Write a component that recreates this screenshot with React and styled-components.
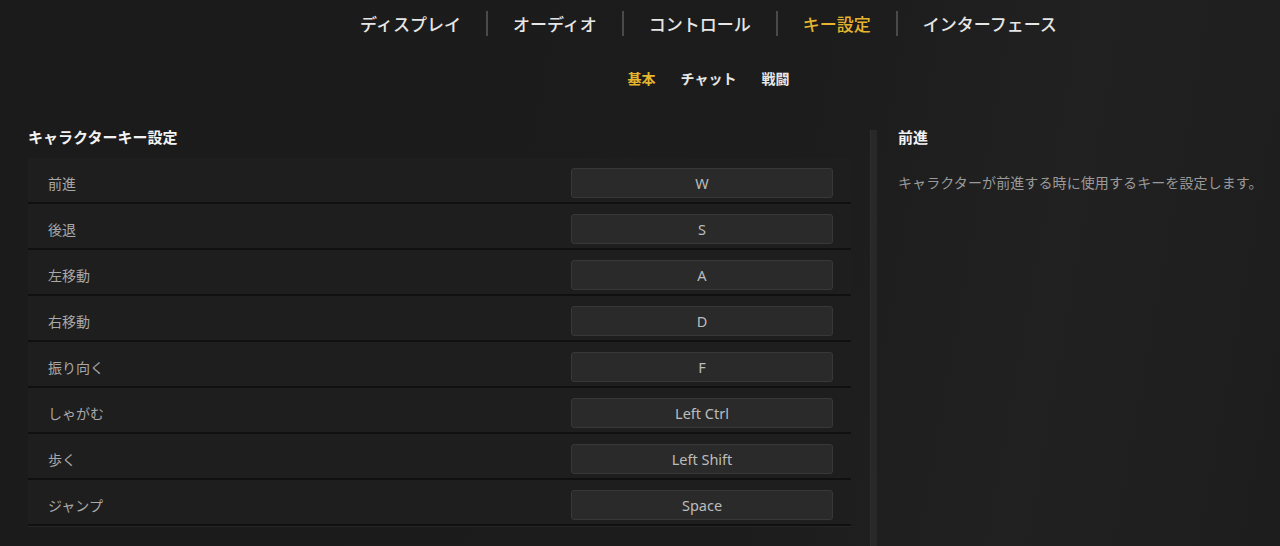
import styled, { createGlobalStyle } from 'styled-components';

const GlobalStyle = createGlobalStyle`
  html, body {
    margin: 0;
    padding: 0;
    background: #1b1b1b;
  }
  body {
    font-family: "Noto Sans", "Noto Sans CJK JP", sans-serif;
    color: #ddd;
  }
`;

const tabs = ['ディスプレイ', 'オーディオ', 'コントロール', 'キー設定', 'インターフェース'];
const subTabs = ['基本', 'チャット', '戦闘'];
const bindings = [
  { label: '前進', key: 'W' },
  { label: '後退', key: 'S' },
  { label: '左移動', key: 'A' },
  { label: '右移動', key: 'D' },
  { label: '振り向く', key: 'F' },
  { label: 'しゃがむ', key: 'Left Ctrl' },
  { label: '歩く', key: 'Left Shift' },
  { label: 'ジャンプ', key: 'Space' },
];

const Page = styled.div`
  width: 1280px;
  height: 546px;
  overflow: hidden;
  background: linear-gradient(100deg, #1b1b1b 0%, #1c1c1c 60%, #212121 80%, #1d1d1d 100%);
`;

const TopNav = styled.nav`
  display: flex;
  justify-content: center;
  align-items: center;
  height: 46px;
  padding-left: 137px;
`;

const NavItem = styled.div`
  padding: 0 25px;
  font-family: "Noto Sans CJK JP", sans-serif;
  font-size: 17px;
  font-weight: 500;
  line-height: 25px;
  color: ${(p) => (p.$active ? '#e5b52f' : '#e6e6e6')};
  border-left: ${(p) => (p.$first ? 'none' : '2px solid #4a4a4a')};
`;

const SubNav = styled.div`
  display: flex;
  justify-content: center;
  gap: 25px;
  padding: 22px 0 0 137px;
  height: 40px;
`;

const SubItem = styled.div`
  font-family: "Noto Sans CJK JP", sans-serif;
  font-size: 14px;
  font-weight: 700;
  line-height: 20px;
  color: ${(p) => (p.$active ? '#e5b52f' : '#e6e6e6')};
`;

const Body = styled.div`
  display: flex;
  padding: 18px 0 0 28px;
`;

const LeftColumn = styled.section`
  width: 823px;
`;

const SectionTitle = styled.h2`
  margin: 0;
  font-family: "Noto Sans CJK JP", sans-serif;
  font-size: 15px;
  font-weight: 700;
  line-height: 22px;
  height: 32px;
  color: #f2f2f2;
`;

const Row = styled.div`
  display: flex;
  align-items: center;
  justify-content: space-between;
  padding: 10px 18px 4px 20px;
  background: #1e1e1e;
  border-bottom: 2px solid #101010;
  box-shadow: 0 1px 0 #262626;
`;

const Label = styled.span`
  font-family: "Noto Sans CJK JP", sans-serif;
  font-size: 14px;
  color: #a8a8a8;
`;

const KeyBox = styled.div`
  box-sizing: border-box;
  width: 262px;
  height: 30px;
  display: flex;
  align-items: center;
  justify-content: center;
  background: #2a2a2a;
  border: 1px solid #383838;
  border-radius: 3px;
  font-size: 14.5px;
  color: #bcbcbc;
`;

const Track = styled.div`
  width: 6px;
  margin: 4px 21px 0 19px;
  height: 440px;
  background: #282828;
  border-left: 1px solid #2e2e2e;
`;

const Info = styled.aside`
  flex: 1;
`;

const InfoTitle = styled.h3`
  margin: 0;
  font-family: "Noto Sans CJK JP", sans-serif;
  font-size: 15px;
  font-weight: 700;
  line-height: 22px;
  color: #f2f2f2;
`;

const InfoText = styled.p`
  margin: 24px 0 0;
  font-family: "Noto Sans CJK JP", sans-serif;
  font-size: 14px;
  line-height: 20px;
  letter-spacing: 0.1px;
  color: #9a9a9a;
  white-space: nowrap;
`;

export default function App() {
  return (
    <>
      <GlobalStyle />
      <Page>
        <TopNav>
          {tabs.map((t, i) => (
            <NavItem key={t} $first={i === 0} $active={t === 'キー設定'}>
              {t}
            </NavItem>
          ))}
        </TopNav>
        <SubNav>
          {subTabs.map((t, i) => (
            <SubItem key={t} $active={i === 0}>
              {t}
            </SubItem>
          ))}
        </SubNav>
        <Body>
          <LeftColumn>
            <SectionTitle>キャラクターキー設定</SectionTitle>
            {bindings.map((b) => (
              <Row key={b.label}>
                <Label>{b.label}</Label>
                <KeyBox>{b.key}</KeyBox>
              </Row>
            ))}
          </LeftColumn>
          <Track />
          <Info>
            <InfoTitle>前進</InfoTitle>
            <InfoText>キャラクターが前進する時に使用するキーを設定します。</InfoText>
          </Info>
        </Body>
      </Page>
    </>
  );
}
